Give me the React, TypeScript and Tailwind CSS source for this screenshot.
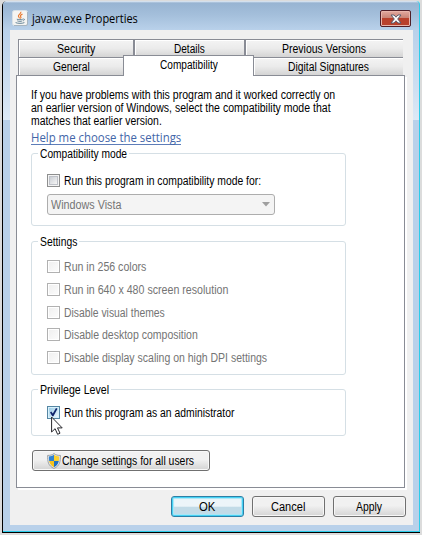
import { useLayoutEffect, useRef, useState, type ReactNode } from "react";
import { clsx } from "clsx";

// Text condensed horizontally so that it fills the given width.
function Fit({ w, className, children }: { w: number; className?: string; children: ReactNode }) {
  const ref = useRef<HTMLSpanElement>(null);
  const [scale, setScale] = useState(1);
  useLayoutEffect(() => {
    if (ref.current) setScale(w / ref.current.offsetWidth);
  }, [w]);
  return (
    <span className={clsx("block shrink-0 whitespace-nowrap", className)} style={{ width: w }}>
      <span ref={ref} className="inline-block origin-left" style={{ transform: `scaleX(${scale})` }}>
        {children}
      </span>
    </span>
  );
}

function Tab({ w, className, children }: { w: number; className?: string; children: string }) {
  return (
    <div
      className={clsx(
        "flex justify-center border-t border-l border-[#898c95] bg-linear-to-b from-[#f4f4f4] via-[#ebebeb] via-50% to-[#d4d4d4] pt-[3px] shadow-[inset_1px_1px_0_#fff]",
        className,
      )}
    >
      <Fit w={w}>{children}</Fit>
    </div>
  );
}

function Group({ title, w, className, children }: { title: string; w: number; className?: string; children: ReactNode }) {
  return (
    <div className={clsx("ml-[14px] w-[315px] rounded-[3px] border border-[#d5dfe5]", className)}>
      <div className="-mt-[7px] ml-[6px] flex h-[14px]">
        <div className="bg-white px-[2px] pt-px">
          <Fit w={w}>{title}</Fit>
        </div>
      </div>
      {children}
    </div>
  );
}

function Check({ label, w, disabled, checked, className }: { label: string; w: number; disabled?: boolean; checked?: boolean; className?: string }) {
  return (
    <div className={clsx("ml-[15px] flex h-[13px] items-center", className)}>
      <span
        className={clsx(
          "flex size-[13px] shrink-0 border p-px",
          checked ? "border-[#5586a3] bg-[#d8f1fc]" : disabled ? "border-[#b1b1b1] bg-white" : "border-[#8e8f8f] bg-[#f4f4f4]",
        )}
      >
        <span
          className={clsx(
            "block size-[9px]",
            checked
              ? "bg-linear-to-br from-[#9bcce6] to-[#ecf8fd]"
              : disabled
                ? "bg-linear-to-br from-[#f0f0f0] to-[#fbfbfb]"
                : "border border-[#bfc2c9] bg-linear-to-br from-[#cbcfd5] to-[#f6f6f6]",
          )}
        >
          {checked && (
            <svg viewBox="0 0 9 9" className="block size-[9px] overflow-visible">
              <path d="M1 4.5 2.3 3.5 3.8 5.6 7 0 8.5 .7 4.4 8.2 3.3 8.2Z" fill="#10246b" />
            </svg>
          )}
        </span>
      </span>
      <Fit w={w} className={clsx("ml-[4px] translate-y-px", disabled && "text-[#747474]")}>
        {label}
      </Fit>
    </div>
  );
}

function Button({ label, w, primary }: { label: string; w: number; primary?: boolean }) {
  return (
    <button
      className={clsx(
        "flex h-[21px] w-[73px] items-center justify-center rounded-[3px] border pr-px",
        primary
          ? "border-[#2c7fa6] bg-linear-to-b from-[#edf5f9] from-48% to-[#c2dbe7] to-55% shadow-[inset_0_0_0_1px_#45d2f4,inset_0_0_1px_2px_#a8e6f7]"
          : "border-[#707070] bg-linear-to-b from-[#f1f1f1] from-45% to-[#d4d4d4] shadow-[inset_0_0_0_1px_#f7f7f7]",
      )}
    >
      <Fit w={w} className="translate-y-px">{label}</Fit>
    </button>
  );
}

function JavaIcon() {
  return (
    <svg viewBox="0 0 16 16" className="size-[16px] shrink-0">
      <rect x=".5" y=".5" width="15" height="15" rx="2" fill="#f4f4f2" stroke="#d9e1e7" />
      <path d="M15.5 2v12a1.5 1.5 0 0 1-1.5 1.5H2" fill="none" stroke="#9aa9b5" strokeWidth=".8" />
      <path d="M8.8 1.8C9.6 3.6 5.8 4.5 6.4 6.2c.2.8 1 1.4 1.1 2.2M10.5 4C8.6 5 7.9 5.7 8.8 6.8c.5.7 0 1.3-.5 1.7" fill="none" stroke="#e8792f" strokeWidth="1.15" />
      <path d="M4.8 9.2c1.6.6 4.6.6 6 0M5.3 10.9c1.4.6 3.8.6 5 0M3.6 12.6c2 1 6.8 1 8.8 0M11.2 9c1.7-.4 1.6 1.2 0 1.8" fill="none" stroke="#56788f" strokeWidth=".9" />
    </svg>
  );
}

function Shield() {
  return (
    <svg viewBox="0 0 14 16" className="h-[16px] w-[14px] shrink-0">
      <defs>
        <clipPath id="shield">
          <path d="M7 1.8C5.4 3 3.6 3.5 1.9 3.5c0 5 .5 8.3 5.1 10.7 4.6-2.4 5.1-5.7 5.1-10.7C10.4 3.5 8.6 3 7 1.8Z" />
        </clipPath>
      </defs>
      <path d="M7 .5C5.2 2 3 2.5.6 2.4c0 6.2.3 10.2 6.4 13.1 6.1-2.9 6.4-6.9 6.4-13.1C11 2.5 8.8 2 7 .5Z" fill="#e2e6e8" stroke="#8b9195" strokeWidth=".8" />
      <g clipPath="url(#shield)">
        <path d="M0 0h7v8H0z" fill="#2f83d2" />
        <path d="M7 0h7v8H7z" fill="#fbd02e" />
        <path d="M0 8h7v8H0z" fill="#f6c21d" />
        <path d="M7 8h7v8H7z" fill="#2171c2" />
      </g>
    </svg>
  );
}

export default function App() {
  return (
    <div className="h-[535px] w-[422px] overflow-hidden bg-[#dcdcdc] pt-px pl-[2px] font-['Liberation_Sans',Arial,sans-serif] text-[12px] leading-[13px] text-black">
      <div className="flex h-[532px] w-[418px] flex-col rounded-t-[5px] border-b border-l border-black bg-[#b9d1ea]">
        <div className="relative flex min-h-0 grow flex-col rounded-t-[4px] border-r border-b border-[#2bcdea] bg-[linear-gradient(#e7eff7_0,#98b4d2_2px,#a4bfdb_14px,#b9d1ea_29px,#cfe0f2_90px,#dce9f6_119px,#b9d1ea_119px)] pr-[6px] pb-[5px] pl-[7px]">
          <header className="flex h-[29px] shrink-0 items-start">
            <div className="mt-[9px] ml-[2px]">
              <JavaIcon />
            </div>
            <Fit w={106} className="mt-[10px] ml-[4px] font-['Open_Sans',sans-serif] text-[12px] leading-[16px]">
              javaw.exe Properties
            </Fit>
            <button className="mt-[9px] mr-[2px] ml-auto flex h-[17px] w-[31px] items-center justify-center rounded-[2px] border border-[#501f28] bg-linear-to-b from-[#e3aaa0] from-0% via-[#c98577] via-45% to-[#b9412c] to-50% shadow-[inset_0_0_0_1px_#e8b5ab]">
              <svg viewBox="0 0 12 10" className="h-[10px] w-[12px]">
                <path d="M1 1h3l2 2.2L8 1h3L7.7 5 11 9H8L6 6.8 4 9H1l3.3-4z" fill="#fff" stroke="#585c6e" strokeWidth="1" />
              </svg>
            </button>
          </header>

          <main className="flex h-[495px] shrink-0 flex-col bg-[#f0f0f0] pl-[6px]">
            <div className="mt-[9px] ml-[2px] grid h-[18px] w-[385px] shrink-0 grid-cols-[116px_111px_158px] border-r border-[#898c95]">
              <Tab w={38} className="border-r">Security</Tab>
              <Tab w={31} className="border-r">Details</Tab>
              <Tab w={84} className="pr-[2px]">Previous Versions</Tab>
            </div>
            <div className="ml-[2px] grid h-[18px] w-[385px] shrink-0 grid-cols-[105px_131px_149px] border-r border-[#898c95]">
              <Tab w={37}>General</Tab>
              <div className="relative z-10 -mt-[2px] -mb-px flex justify-center border-t border-r border-l border-[#898c95] bg-white pt-[3px]">
                <Fit w={58}>Compatibility</Fit>
              </div>
              <Tab w={81} className="border-l-0">Digital Signatures</Tab>
            </div>

            <section className="flex h-[413px] w-[389px] shrink-0 flex-col border border-[#898c95] bg-white shadow-[2px_2px_0_#fff]">
              <div className="mt-[13px] ml-[14px] shrink-0">
                <Fit w={304}>If you have problems with this program and it worked correctly on</Fit>
                <Fit w={300}>an earlier version of Windows, select the compatibility mode that</Fit>
                <Fit w={131}>matches that earlier version.</Fit>
              </div>
              <a className="mt-[2px] ml-[14px] h-[15px] w-[150px] shrink-0 border-b border-[#5e7db8] text-[#4265a8]">
                <Fit w={150} className="translate-y-px font-['Open_Sans',sans-serif] text-[12px] leading-[14px]">
                  Help me choose the settings
                </Fit>
              </a>

              <Group title="Compatibility mode" w={87} className="mt-[8px] h-[73px] shrink-0">
                <Check label="Run this program in compatibility mode for:" w={197} className="mt-[13px]" />
                <div className="mt-[7px] ml-[15px] flex h-[21px] w-[228px] items-center justify-between rounded-[3px] border border-[#adadad] bg-[#f4f4f4] pr-[4px] pl-[3px] text-[#747474]">
                  <Fit w={70} className="translate-y-px">Windows Vista</Fit>
                  <svg viewBox="0 0 8 5" className="h-[5px] w-[8px]">
                    <path d="M0 0h8L4 4.5z" fill="#9f9f9f" />
                  </svg>
                </div>
              </Group>

              <Group title="Settings" w={37} className="mt-[15px] h-[134px] shrink-0">
                <Check disabled label="Run in 256 colors" w={82} className="mt-[11px]" />
                <Check disabled label="Run in 640 x 480 screen resolution" w={164} className="mt-[10px]" />
                <Check disabled label="Disable visual themes" w={101} className="mt-[10px]" />
                <Check disabled label="Disable desktop composition" w={134} className="mt-[9px]" />
                <Check disabled label="Disable display scaling on high DPI settings" w={203} className="mt-[10px]" />
              </Group>

              <Group title="Privilege Level" w={69} className="mt-[14px] h-[47px] shrink-0">
                <div className="relative">
                  <Check checked label="Run this program as an administrator" w={170} className="mt-[9px]" />
                  <svg viewBox="0 0 12 19" className="absolute top-[10px] left-[19px] h-[19px] w-[12px]">
                    <path d="M.6 1v15l3.5-3.3 2.5 5.6 2.4-1.1-2.5-5.3h4.7z" fill="#fff" stroke="#25252b" strokeWidth="1" />
                  </svg>
                </div>
              </Group>

              <button className="mt-[14px] ml-[15px] flex h-[21px] w-[178px] shrink-0 items-center rounded-[3px] border border-[#707070] bg-linear-to-b from-[#f1f1f1] from-45% to-[#d3d3d3] pl-[14px] shadow-[inset_0_0_0_1px_#f8f8f8]">
                <Shield />
                <Fit w={132} className="ml-[1px] translate-y-px text-left">Change settings for all users</Fit>
              </button>
            </section>

            <footer className="mt-[8px] flex justify-end gap-[8px] pr-[7px]">
              <Button label="OK" w={16} primary />
              <Button label="Cancel" w={34} />
              <Button label="Apply" w={26} />
            </footer>
          </main>
        </div>
      </div>
    </div>
  );
}
